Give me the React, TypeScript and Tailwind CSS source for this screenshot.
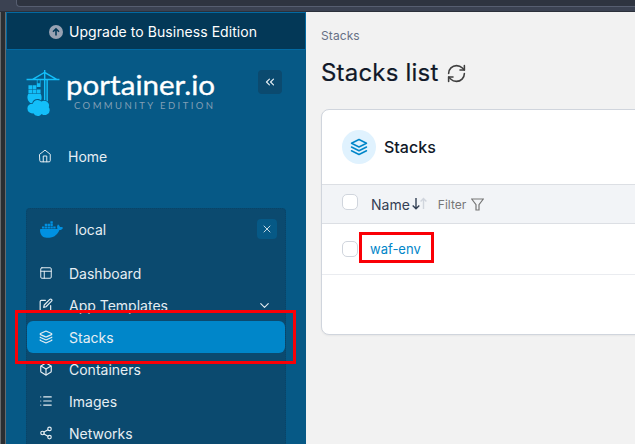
import type { ReactNode } from "react";
import { ChevronDown, ChevronsLeft, Layers, List, RefreshCw, Share2, X } from "lucide-react";
import { FiEdit, FiLayers, FiLayout, FiBox, FiHome } from "react-icons/fi";
import { SiDocker, SiPortainer } from "react-icons/si";

function Item({ icon, label, active, chevron }: { icon: ReactNode; label: string; active?: boolean; chevron?: boolean }) {
  return (
    <div className={`flex h-8 shrink-0 items-center rounded-md pl-3 pr-[13px] ${active ? "bg-[#0086c9]" : ""}`}>
      <span className="flex w-[30px] shrink-0 items-center text-[#e6eef3]">{icon}</span>
      <span className="flex-1">{label}</span>
      {chevron && <ChevronDown size={15} strokeWidth={1.8} />}
    </div>
  );
}

function Sidebar() {
  return (
    <aside className="flex w-[300px] shrink-0 flex-col bg-[#065986] text-[14px] text-[#e6eef3]">
      <div className="flex h-[38px] shrink-0 items-center justify-center gap-[6px] border border-[#0369a1] bg-[#033857] pr-[6px] pt-px text-[14px] text-white">
        <svg width="14" height="14" viewBox="0 0 14 14">
          <circle cx="7" cy="7" r="7" fill="#98a2b3" />
          <path d="M7 10.5V4M4 6.8 7 3.8l3 3" fill="none" stroke="#033857" strokeWidth="1.6" />
        </svg>
        <span className="tracking-[0.06px]">Upgrade to Business Edition</span>
      </div>
      <div className="flex h-[90px] shrink-0 pl-[14px] pr-6 pt-[19px]">
        <SiPortainer className="mt-px shrink-0 text-[#13bef9]" size={46} />
        <svg className="shrink-0 overflow-visible" width="153" height="46" viewBox="0 0 153 46">
          <text x="0" y="26" textLength="149" lengthAdjust="spacingAndGlyphs" fill="white" stroke="white" strokeWidth="0.35" className="font-[Lato] text-[27px] font-normal">portainer.io</text>
          <text x="8" y="40" textLength="139" fill="#819fb5" className="font-[Lato] text-[9.5px]">COMMUNITY EDITION</text>
        </svg>
        <div className="ml-auto mt-px flex size-6 items-center justify-center rounded bg-[#0b4a6f]">
          <ChevronsLeft size={14} />
        </div>
      </div>
      <div className="flex h-8 shrink-0 items-center pl-8">
        <span className="w-[30px]"><FiHome size={14} strokeWidth={1.7} /></span>
        <span>Home</span>
      </div>
      <div className="ml-5 mt-9 flex w-[260px] flex-1 flex-col rounded-t border border-dotted border-[#084468] bg-[#0b4a6f]">
        <div className="flex h-12 shrink-0 items-center pb-2 pl-[13px] pr-2">
          <SiDocker size={23} className="mr-3 text-[#0091e2]" />
          <span className="flex-1">local</span>
          <span className="flex size-5 items-center justify-center rounded bg-[#065986]"><X size={12} strokeWidth={1.7} /></span>
        </div>
        <Item icon={<FiLayout size={14} strokeWidth={1.7} />} label="Dashboard" />
        <Item icon={<FiEdit size={14} />} label="App Templates" chevron />
        <Item icon={<Layers size={14} />} label="Stacks" active />
        <Item icon={<FiBox size={14} />} label="Containers" />
        <Item icon={<List size={14} strokeWidth={1.9} />} label="Images" />
        <Item icon={<Share2 size={14} />} label="Networks" />
      </div>
    </aside>
  );
}

function Checkbox() {
  return <span className="size-4 shrink-0 rounded-[5px] border border-[#d0d5dd] bg-white" />;
}

function Content() {
  return (
    <main className="min-w-0 flex-1 bg-[#f2f2f2] pl-[15px] pt-[14px]">
      <div className="h-[19px] text-[12px] leading-[19px] tracking-[0.1px] text-[#667085]">Stacks</div>
      <div className="mt-[12px] flex h-8 items-center gap-[7px] text-[#101828]">
        <h1 className="text-[24px] leading-8 font-normal tracking-[0.2px] [-webkit-text-stroke:0.2px]">Stacks list</h1>
        <RefreshCw size={21} strokeWidth={1.8} className="text-[#3f3f3f]" />
      </div>
      <section className="mt-5 h-[226px] w-[340px] rounded-lg border border-[#d0d5dd] bg-white shadow-xs">
        <div className="flex h-[74px] items-center gap-2 pl-5 text-[16px] text-[#101828]">
          <span className="flex size-[34px] items-center justify-center rounded-full bg-[#e0f2fe] text-[#0086c9]">
            <FiLayers size={18} />
          </span>
          <span className="pb-px font-medium">Stacks</span>
        </div>
        <div className="flex h-10 items-center border-y border-[#dcdfe4] bg-[#f2f4f7] pl-5">
          <span className="mb-1 flex"><Checkbox /></span>
          <span className="ml-[13px] text-[14px] text-[#344054]">Name</span>
          <svg className="ml-[2px]" width="15" height="14" viewBox="0 0 15 14" fill="none" strokeWidth="1.4">
            <path d="M4 1v10.6M.7 8.5 4 11.8l3.3-3.3" stroke="#344054" />
            <path d="M11.5 12V1.4M8.6 4.4l2.9-3 2.9 3" stroke="#d0d5dd" />
          </svg>
          <span className="ml-[11px] mt-px text-[12px] text-[#767676]">Filter</span>
          <svg className="ml-[5px]" width="13" height="13" viewBox="0 0 13 13"><path d="M.7 1h11.6L8 6.6V12H5V6.6Z" fill="none" stroke="#767676" strokeWidth="1.2" /></svg>
        </div>
        <div className="flex h-[51px] items-center border-b border-[#eaecf0] pl-5 text-[13px] text-[#0086c9]">
          <Checkbox />
          <span className="ml-[12px] pt-[2px]">waf-env</span>
        </div>
      </section>
    </main>
  );
}

export default function App() {
  return (
    <div className="relative flex h-[444px] w-[635px] flex-col overflow-hidden font-[Inter,sans-serif]">
      <div className="h-3 shrink-0 border-b border-[#2b303b] bg-[#3b4252] pl-4">
        <div className="h-[7px] rounded-bl-[4px] border-b border-l border-[#565e70] bg-[#2e3440]" />
      </div>
      <div className="flex min-h-0 flex-1">
        <div className="w-[6px] shrink-0 border-x border-[#686b6d] bg-[#2a2e32]" />
        <Sidebar />
        <Content />
      </div>
      <div className="absolute left-[15px] top-[310px] h-[54px] w-[281px] border-3 border-[#fa0006]" />
      <div className="absolute left-[359px] top-[232px] h-[31px] w-[75px] border-3 border-[#fa0006]" />
    </div>
  );
}
